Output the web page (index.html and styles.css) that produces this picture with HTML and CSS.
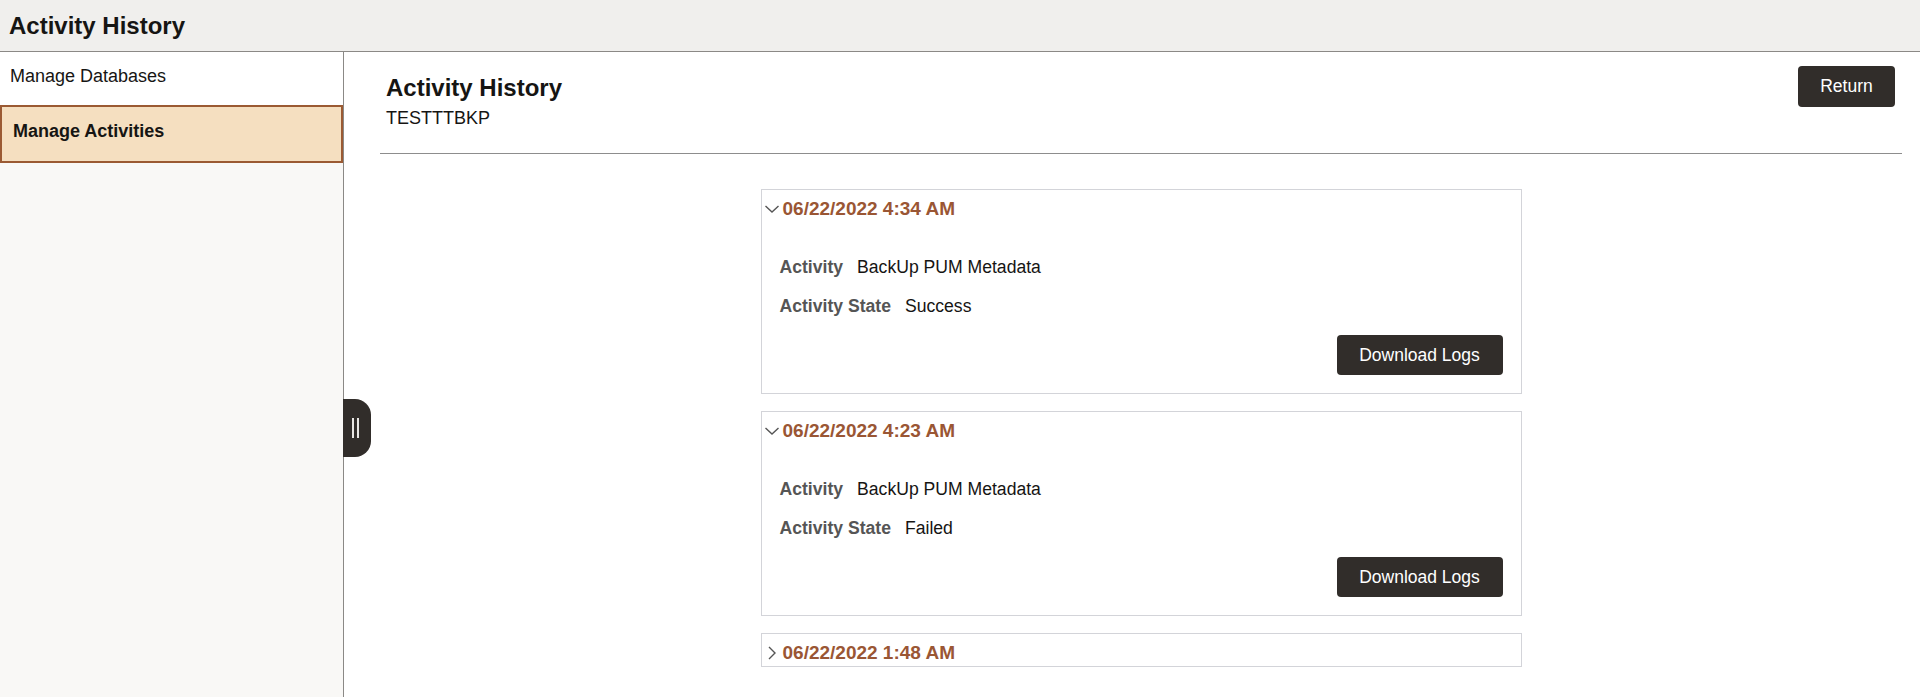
FILE: index.html
```html
<!DOCTYPE html>
<html lang="en">
<head>
<meta charset="utf-8">
<title>Activity History</title>
<link rel="stylesheet" href="styles.css">
</head>
<body>
<header class="topbar">
  <h1 class="topbar-title">Activity History</h1>
</header>
<div class="layout">
  <nav class="sidebar">
    <div class="nav-item">Manage Databases</div>
    <div class="nav-item nav-item-active">Manage Activities</div>
    <div class="collapse-handle"><span class="bar"></span><span class="bar"></span></div>
  </nav>
  <main class="main">
    <div class="page-head">
      <div class="page-titles">
        <h2 class="page-title">Activity History</h2>
        <div class="page-sub">TESTTTBKP</div>
      </div>
      <button class="btn btn-return">Return</button>
    </div>
    <div class="cards">
      <section class="card">
        <div class="card-head">
          <svg class="chev" width="20" height="22" viewBox="0 0 20 22"><polyline points="2.5,8 9,14 15.5,8" fill="none" stroke="#555" stroke-width="1.4"/></svg>
          <span class="card-date">06/22/2022 4:34 AM</span>
        </div>
        <div class="card-body">
          <div class="field"><span class="label">Activity</span><span class="value">BackUp PUM Metadata</span></div>
          <div class="field"><span class="label">Activity State</span><span class="value">Success</span></div>
          <div class="card-actions"><button class="btn btn-dl">Download Logs</button></div>
        </div>
      </section>
      <section class="card">
        <div class="card-head">
          <svg class="chev" width="20" height="22" viewBox="0 0 20 22"><polyline points="2.5,8 9,14 15.5,8" fill="none" stroke="#555" stroke-width="1.4"/></svg>
          <span class="card-date">06/22/2022 4:23 AM</span>
        </div>
        <div class="card-body">
          <div class="field"><span class="label">Activity</span><span class="value">BackUp PUM Metadata</span></div>
          <div class="field"><span class="label">Activity State</span><span class="value">Failed</span></div>
          <div class="card-actions"><button class="btn btn-dl">Download Logs</button></div>
        </div>
      </section>
      <section class="card">
        <div class="card-head">
          <svg class="chev" width="20" height="22" viewBox="0 0 20 22"><polyline points="6,5 12,11 6,17" fill="none" stroke="#555" stroke-width="1.4"/></svg>
          <span class="card-date">06/22/2022 1:48 AM</span>
        </div>
      </section>
    </div>
  </main>
</div>
</body>
</html>
```

FILE: styles.css
```css
* { box-sizing: border-box; }
html, body { margin: 0; padding: 0; }
body {
  font-family: "Liberation Sans", Arial, sans-serif;
  color: #1a1a1a;
  background: #fff;
  height: 100vh;
  overflow: hidden;
  display: flex;
  flex-direction: column;
}
.topbar {
  height: 52px;
  flex: 0 0 52px;
  background: #f0efed;
  border-bottom: 1px solid #8b8986;
  display: flex;
  align-items: center;
  padding: 0 0 0 9px;
}
.topbar-title {
  margin: 0;
  font-size: 24px;
  line-height: 28px;
  font-weight: bold;
  color: #161513;
}
.layout {
  flex: 1;
  display: flex;
  min-height: 0;
}
.sidebar {
  position: relative;
  width: 344px;
  flex: 0 0 344px;
  background: #f9f8f6;
  border-right: 1px solid #8b8986;
}
.nav-item {
  background: #fff;
  font-size: 18px;
  line-height: 22px;
  padding: 13px 10px 18px 10px;
  color: #161513;
}
.nav-item-active {
  background: #f5dfc0;
  border: 2px solid #9b5a33;
  font-weight: bold;
  padding: 13px 10px 19px 11px;
}
.collapse-handle {
  position: absolute;
  left: 343px;
  top: 347px;
  width: 28px;
  height: 58px;
  background: #312d2a;
  border-radius: 0 16px 16px 0;
  display: flex;
  justify-content: flex-start;
  align-items: center;
  gap: 3px;
  padding-left: 9px;
  z-index: 2;
}
.collapse-handle .bar {
  width: 2px;
  height: 20px;
  background: #e8e6e3;
}
.main {
  flex: 1;
  padding: 0 18px 0 36px;
  min-width: 0;
}
.page-head {
  display: flex;
  justify-content: space-between;
  align-items: flex-start;
  padding: 14px 7px 24px 6px;
  border-bottom: 1px solid #8d8d8d;
}
.page-titles { padding-top: 8px; }
.page-title {
  margin: 0;
  font-size: 24px;
  line-height: 28px;
  font-weight: bold;
  color: #161513;
}
.page-sub {
  margin-top: 5px;
  font-size: 18px;
  line-height: 22px;
  color: #161513;
}
.btn {
  font-family: "Liberation Sans", Arial, sans-serif;
  font-size: 17.5px;
  color: #fff;
  background: #312d2a;
  border: none;
  border-radius: 4px;
  cursor: pointer;
}
.btn-return {
  width: 97px;
  height: 41px;
  padding: 0;
}
.cards {
  width: 50%;
  margin: 35px auto 0;
  display: flex;
  flex-direction: column;
  gap: 17px;
}
.card {
  border: 1px solid #d3d4d9;
  background: #fff;
}
.card-head {
  height: 32px;
  display: flex;
  align-items: flex-start;
  padding: 8px 0 0 1px;
}
.chev { display: block; flex: 0 0 20px; }
.card-date {
  font-size: 19px;
  line-height: 22px;
  font-weight: bold;
  color: #9a5634;
}
.card-body {
  padding: 34px 18px 18px 18px;
  display: flex;
  flex-direction: column;
  gap: 17px;
}
.field {
  font-size: 17.6px;
  line-height: 22px;
  display: flex;
  gap: 14px;
}
.label { font-weight: bold; color: #555; }
.value { color: #161513; }
.card-actions {
  display: flex;
  justify-content: flex-end;
  margin-top: 1px;
}
.btn-dl {
  width: 166px;
  height: 40px;
  padding: 0;
}
```
